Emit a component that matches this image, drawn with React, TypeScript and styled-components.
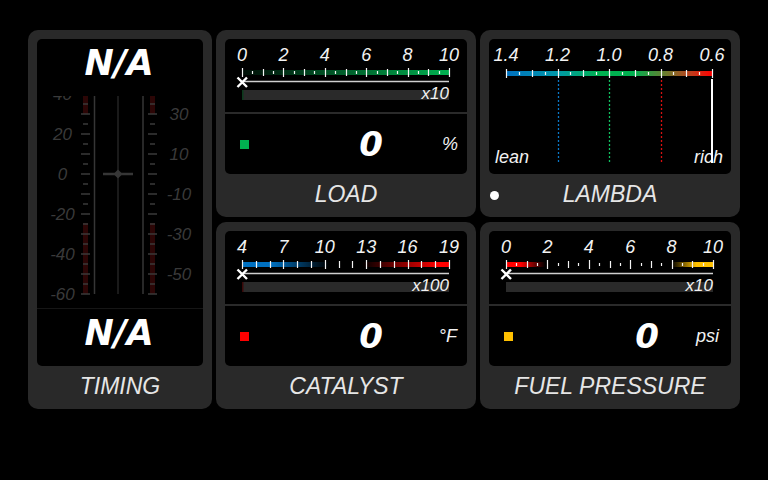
import React from "react";
import styled, { createGlobalStyle } from "styled-components";

const GlobalStyle = createGlobalStyle`
  html, body {
    margin: 0;
    padding: 0;
    background: #000;
  }
  body {
    font-family: "Liberation Sans", Arial, sans-serif;
  }
`;

type Stop = { at: number; color: string; opacity?: number };

type ScaleProps = {
  id: string;
  labels: string[];
  intervals: number;
  tickKind: (i: number) => "major" | "mid" | "minor";
  stops: Stop[];
  multiplier: string;
  marker?: string;
};

const X0 = 17;
const X1 = 224;

const tickSpan = {
  major: [29, 38],
  mid: [30, 37],
  minor: [32, 35],
};

const BarScale = ({ id, labels, intervals, tickKind, stops, multiplier, marker }: ScaleProps) => {
  const step = (X1 - X0) / intervals;
  const labelStep = (X1 - X0) / (labels.length - 1);
  return (
    <svg width="241" height="73" viewBox="0 0 241 73">
      <defs>
        <linearGradient id={id} x1="0" x2="1" y1="0" y2="0">
          {stops.map((s, i) => (
            <stop key={i} offset={s.at} stopColor={s.color} stopOpacity={s.opacity ?? 1} />
          ))}
        </linearGradient>
      </defs>
      {labels.map((l, i) => (
        <text
          key={l}
          x={X0 + i * labelStep}
          y="22"
          textAnchor="middle"
          fontSize="18"
          fontStyle="italic"
          fill="#f2f2f2"
        >
          {l}
        </text>
      ))}
      <rect x={X0} y="31" width={X1 - X0} height="5" fill={`url(#${id})`} />
      {Array.from({ length: intervals + 1 }, (_, i) => {
        const [a, b] = tickSpan[tickKind(i)];
        const x = Math.round(X0 + i * step) + 0.5;
        return <line key={i} x1={x} x2={x} y1={a} y2={b} stroke="#f4f4f4" strokeWidth="1.2" />;
      })}
      <line x1={X0} x2={X1} y1="42.5" y2="42.5" stroke="#cfcfcf" strokeWidth="1.6" />
      <rect x={X0} y="51" width={X1 - X0} height="10" fill="#2a2a2a" />
      {marker && <rect x={X0} y="51" width="1.5" height="10" fill={marker} />}
      <path d="M12.5 38.5 L22 48 M22 38.5 L12.5 48" stroke="#fff" strokeWidth="2.4" />
      <text x={X1} y="60" textAnchor="end" fontSize="17" fontStyle="italic" fill="#f2f2f2">
        {multiplier}
      </text>
    </svg>
  );
};

const LambdaScale = () => {
  const labels = ["1.4", "1.2", "1.0", "0.8", "0.6"];
  const a = 17;
  const b = 223;
  const step = (b - a) / 16;
  const kind = (i: number) => (i % 4 === 0 ? "major" : i % 2 === 0 ? "mid" : "minor");
  const span = { major: [30, 39], mid: [31, 38], minor: [33, 36] };
  const guides = [
    { i: 4, color: "#0a78c8" },
    { i: 8, color: "#10c060" },
    { i: 12, color: "#d81010" },
  ];
  return (
    <svg width="240" height="135" viewBox="0 0 240 135">
      <defs>
        <linearGradient id="lambdaGrad" x1="0" x2="1" y1="0" y2="0">
          <stop offset="0" stopColor="#0070c0" />
          <stop offset="0.25" stopColor="#0098a8" />
          <stop offset="0.45" stopColor="#00b050" />
          <stop offset="0.62" stopColor="#00b050" />
          <stop offset="0.78" stopColor="#6d7a2c" />
          <stop offset="0.9" stopColor="#c03c1c" />
          <stop offset="1" stopColor="#ff0000" />
        </linearGradient>
      </defs>
      {labels.map((l, i) => (
        <text
          key={l}
          x={a + (i * (b - a)) / 4}
          y="22"
          textAnchor="middle"
          fontSize="18"
          fontStyle="italic"
          fill="#f2f2f2"
        >
          {l}
        </text>
      ))}
      <rect x={a} y="32" width={b - a} height="5" fill="url(#lambdaGrad)" />
      {Array.from({ length: 17 }, (_, i) => {
        const [y1, y2] = span[kind(i)];
        const x = Math.round(a + i * step) + 0.5;
        return <line key={i} x1={x} x2={x} y1={y1} y2={y2} stroke="#f4f4f4" strokeWidth="1.2" />;
      })}
      {guides.map((g) => {
        const x = Math.round(a + g.i * step) + 0.5;
        return (
          <line
            key={g.i}
            x1={x}
            x2={x}
            y1="41"
            y2="124"
            stroke={g.color}
            strokeWidth="1.3"
            strokeDasharray="2 2"
          />
        );
      })}
      <text x="6" y="124" fontSize="18" fontStyle="italic" fill="#f2f2f2">
        lean
      </text>
      <text x="234" y="124" textAnchor="end" fontSize="18" fontStyle="italic" fill="#f2f2f2">
        rich
      </text>
      <rect x={b - 1} y="40" width="2" height="84" fill="#fff" />
    </svg>
  );
};

const TimingScale = () => {
  const yOf = (v: number) => 78 - 2 * v;
  const ticks = Array.from({ length: 21 }, (_, i) => 40 - i * 5);
  return (
    <svg width="164" height="212" viewBox="0 0 164 212">
      <rect x="46" y="0" width="5" height="18" fill="#2c0606" />
      <rect x="46" y="127" width="5" height="71" fill="#2c0606" />
      <rect x="113" y="0" width="5" height="18" fill="#2c0606" />
      <rect x="113" y="127" width="5" height="71" fill="#2c0606" />
      <line x1="57.5" x2="57.5" y1="0" y2="198" stroke="#363636" strokeWidth="1.5" />
      <line x1="106" x2="106" y1="0" y2="198" stroke="#363636" strokeWidth="1.5" />
      <line x1="81" x2="81" y1="0" y2="198" stroke="#1a1a1a" strokeWidth="2" />
      {ticks.map((v) => {
        const y = yOf(v);
        const major = v % 10 === 0;
        return (
          <g key={v}>
            <line
              x1={major ? 44 : 46}
              x2={major ? 53 : 51}
              y1={y}
              y2={y}
              stroke="#3a3a3a"
              strokeWidth="1.5"
            />
            <line
              x1={major ? 111 : 113}
              x2={major ? 120 : 118}
              y1={y}
              y2={y}
              stroke="#3a3a3a"
              strokeWidth="1.5"
            />
          </g>
        );
      })}
      {[40, 20, 0, -20, -40, -60].map((v) => (
        <text
          key={v}
          x="25.5"
          y={yOf(v) + 6}
          textAnchor="middle"
          fontSize="17"
          fontStyle="italic"
          fill="#3a3a3a"
        >
          {v}
        </text>
      ))}
      {[30, 10, -10, -30, -50].map((v) => (
        <text
          key={v}
          x="142"
          y={yOf(v) + 6}
          textAnchor="middle"
          fontSize="17"
          fontStyle="italic"
          fill="#3a3a3a"
        >
          {v}
        </text>
      ))}
      <line x1="66" x2="96" y1="78" y2="78" stroke="#363636" strokeWidth="2.5" />
      <polygon points="81,73.5 85.5,78 81,82.5 76.5,78" fill="#363636" />
    </svg>
  );
};

const Dash = styled.div`
  display: grid;
  grid-template-columns: 184px 260px 260px;
  grid-template-rows: 187px 187px;
  gap: 5px 4px;
  padding: 30px 0 0 28px;
  width: 768px;
  height: 480px;
  box-sizing: border-box;
`;

const Panel = styled.section<{ $tall?: boolean }>`
  grid-row: ${({ $tall }) => ($tall ? "span 2" : "auto")};
  background: #292929;
  border-radius: 10px;
  padding: 9px 9px 0 9px;
  display: flex;
  flex-direction: column;
  box-sizing: border-box;
`;

const Screen = styled.div<{ $h: number }>`
  height: ${({ $h }) => $h}px;
  background: #000;
  border-radius: 5px;
  display: flex;
  flex-direction: column;
  overflow: hidden;
  flex-shrink: 0;
`;

const Title = styled.div`
  position: relative;
  flex: 1;
  display: flex;
  align-items: center;
  justify-content: center;
  font-size: 23px;
  font-style: italic;
  color: #e6e6e6;
  padding-bottom: 2px;
`;

const StatusDot = styled.span`
  position: absolute;
  left: 1px;
  top: 50%;
  width: 9px;
  height: 9px;
  margin-top: -5px;
  border-radius: 50%;
  background: #fff;
`;

const Divider = styled.div<{ $size: number; $color: string }>`
  height: ${({ $size }) => $size}px;
  background: ${({ $color }) => $color};
  flex-shrink: 0;
`;

const ValueRow = styled.div`
  flex: 1;
  display: flex;
  align-items: center;
  padding-left: 15px;
`;

const Swatch = styled.span<{ $color: string }>`
  width: 9px;
  height: 9px;
  background: ${({ $color }) => $color};
  flex-shrink: 0;
`;

const Reading = styled.span`
  flex: 1;
  text-align: right;
  font-family: "DejaVu Sans", sans-serif;
  font-weight: bold;
  font-style: italic;
  font-size: 34px;
  color: #fff;
`;

const Unit = styled.span<{ $w: number; $pad: number }>`
  width: ${({ $w }) => $w}px;
  padding-right: ${({ $pad }) => $pad}px;
  box-sizing: border-box;
  text-align: right;
  font-size: 18px;
  font-style: italic;
  color: #f2f2f2;
`;

const BigNA = styled.div`
  height: 57px;
  flex-shrink: 0;
  line-height: 48px;
  text-align: center;
  font-family: "DejaVu Sans", sans-serif;
  font-weight: bold;
  font-style: italic;
  font-size: 35px;
  color: #fff;
  padding-right: 2px;
`;

type GaugeProps = ScaleProps & { swatch: string; unit: string; unitW: number; unitPad: number; title: string };

const BarGauge = ({ swatch, unit, unitW, unitPad, title, ...scale }: GaugeProps) => (
  <Panel>
    <Screen $h={135}>
      <BarScale {...scale} />
      <Divider $size={2} $color="#2a2a2a" />
      <ValueRow>
        <Swatch $color={swatch} />
        <Reading>0</Reading>
        <Unit $w={unitW} $pad={unitPad}>
          {unit}
        </Unit>
      </ValueRow>
    </Screen>
    <Title>{title}</Title>
  </Panel>
);

const halfTicks = (i: number) =>
  (i % 4 === 0 ? "major" : i % 2 === 0 ? "mid" : "minor") as "major" | "mid" | "minor";

export default function App() {
  return (
    <>
      <GlobalStyle />
      <Dash>
        <Panel $tall>
          <Screen $h={327}>
            <BigNA>N/A</BigNA>
            <TimingScale />
            <Divider $size={1} $color="#161616" />
            <BigNA>N/A</BigNA>
          </Screen>
          <Title>TIMING</Title>
        </Panel>

        <BarGauge
          id="loadGrad"
          title="LOAD"
          labels={["0", "2", "4", "6", "8", "10"]}
          intervals={20}
          tickKind={halfTicks}
          stops={[
            { at: 0, color: "#00b050", opacity: 0.08 },
            { at: 1, color: "#00b050", opacity: 1 },
          ]}
          multiplier="x10"
          marker="#0b3a1c"
          swatch="#00b050"
          unit="%"
          unitW={84}
          unitPad={9}
        />

        <Panel>
          <Screen $h={135}>
            <LambdaScale />
          </Screen>
          <Title>
            <StatusDot />
            LAMBDA
          </Title>
        </Panel>

        <BarGauge
          id="catGrad"
          title="CATALYST"
          labels={["4", "7", "10", "13", "16", "19"]}
          intervals={15}
          tickKind={(i) => (i % 3 === 0 ? "major" : "mid")}
          stops={[
            { at: 0, color: "#0070c0", opacity: 1 },
            { at: 0.14, color: "#0070c0", opacity: 1 },
            { at: 0.42, color: "#0070c0", opacity: 0 },
            { at: 0.58, color: "#ff0000", opacity: 0 },
            { at: 0.95, color: "#ff0000", opacity: 1 },
            { at: 1, color: "#ff0000", opacity: 1 },
          ]}
          multiplier="x100"
          marker="#3a0808"
          swatch="#ff0000"
          unit="°F"
          unitW={84}
          unitPad={10}
        />

        <BarGauge
          id="fuelGrad"
          title="FUEL PRESSURE"
          labels={["0", "2", "4", "6", "8", "10"]}
          intervals={20}
          tickKind={halfTicks}
          stops={[
            { at: 0, color: "#ff0000", opacity: 1 },
            { at: 0.07, color: "#ff0000", opacity: 1 },
            { at: 0.19, color: "#ff0000", opacity: 0 },
            { at: 0.8, color: "#ffc000", opacity: 0 },
            { at: 0.92, color: "#ffc000", opacity: 1 },
            { at: 1, color: "#ffc000", opacity: 1 },
          ]}
          multiplier="x10"
          swatch="#ffc000"
          unit="psi"
          unitW={72}
          unitPad={12}
        />
      </Dash>
    </>
  );
}
